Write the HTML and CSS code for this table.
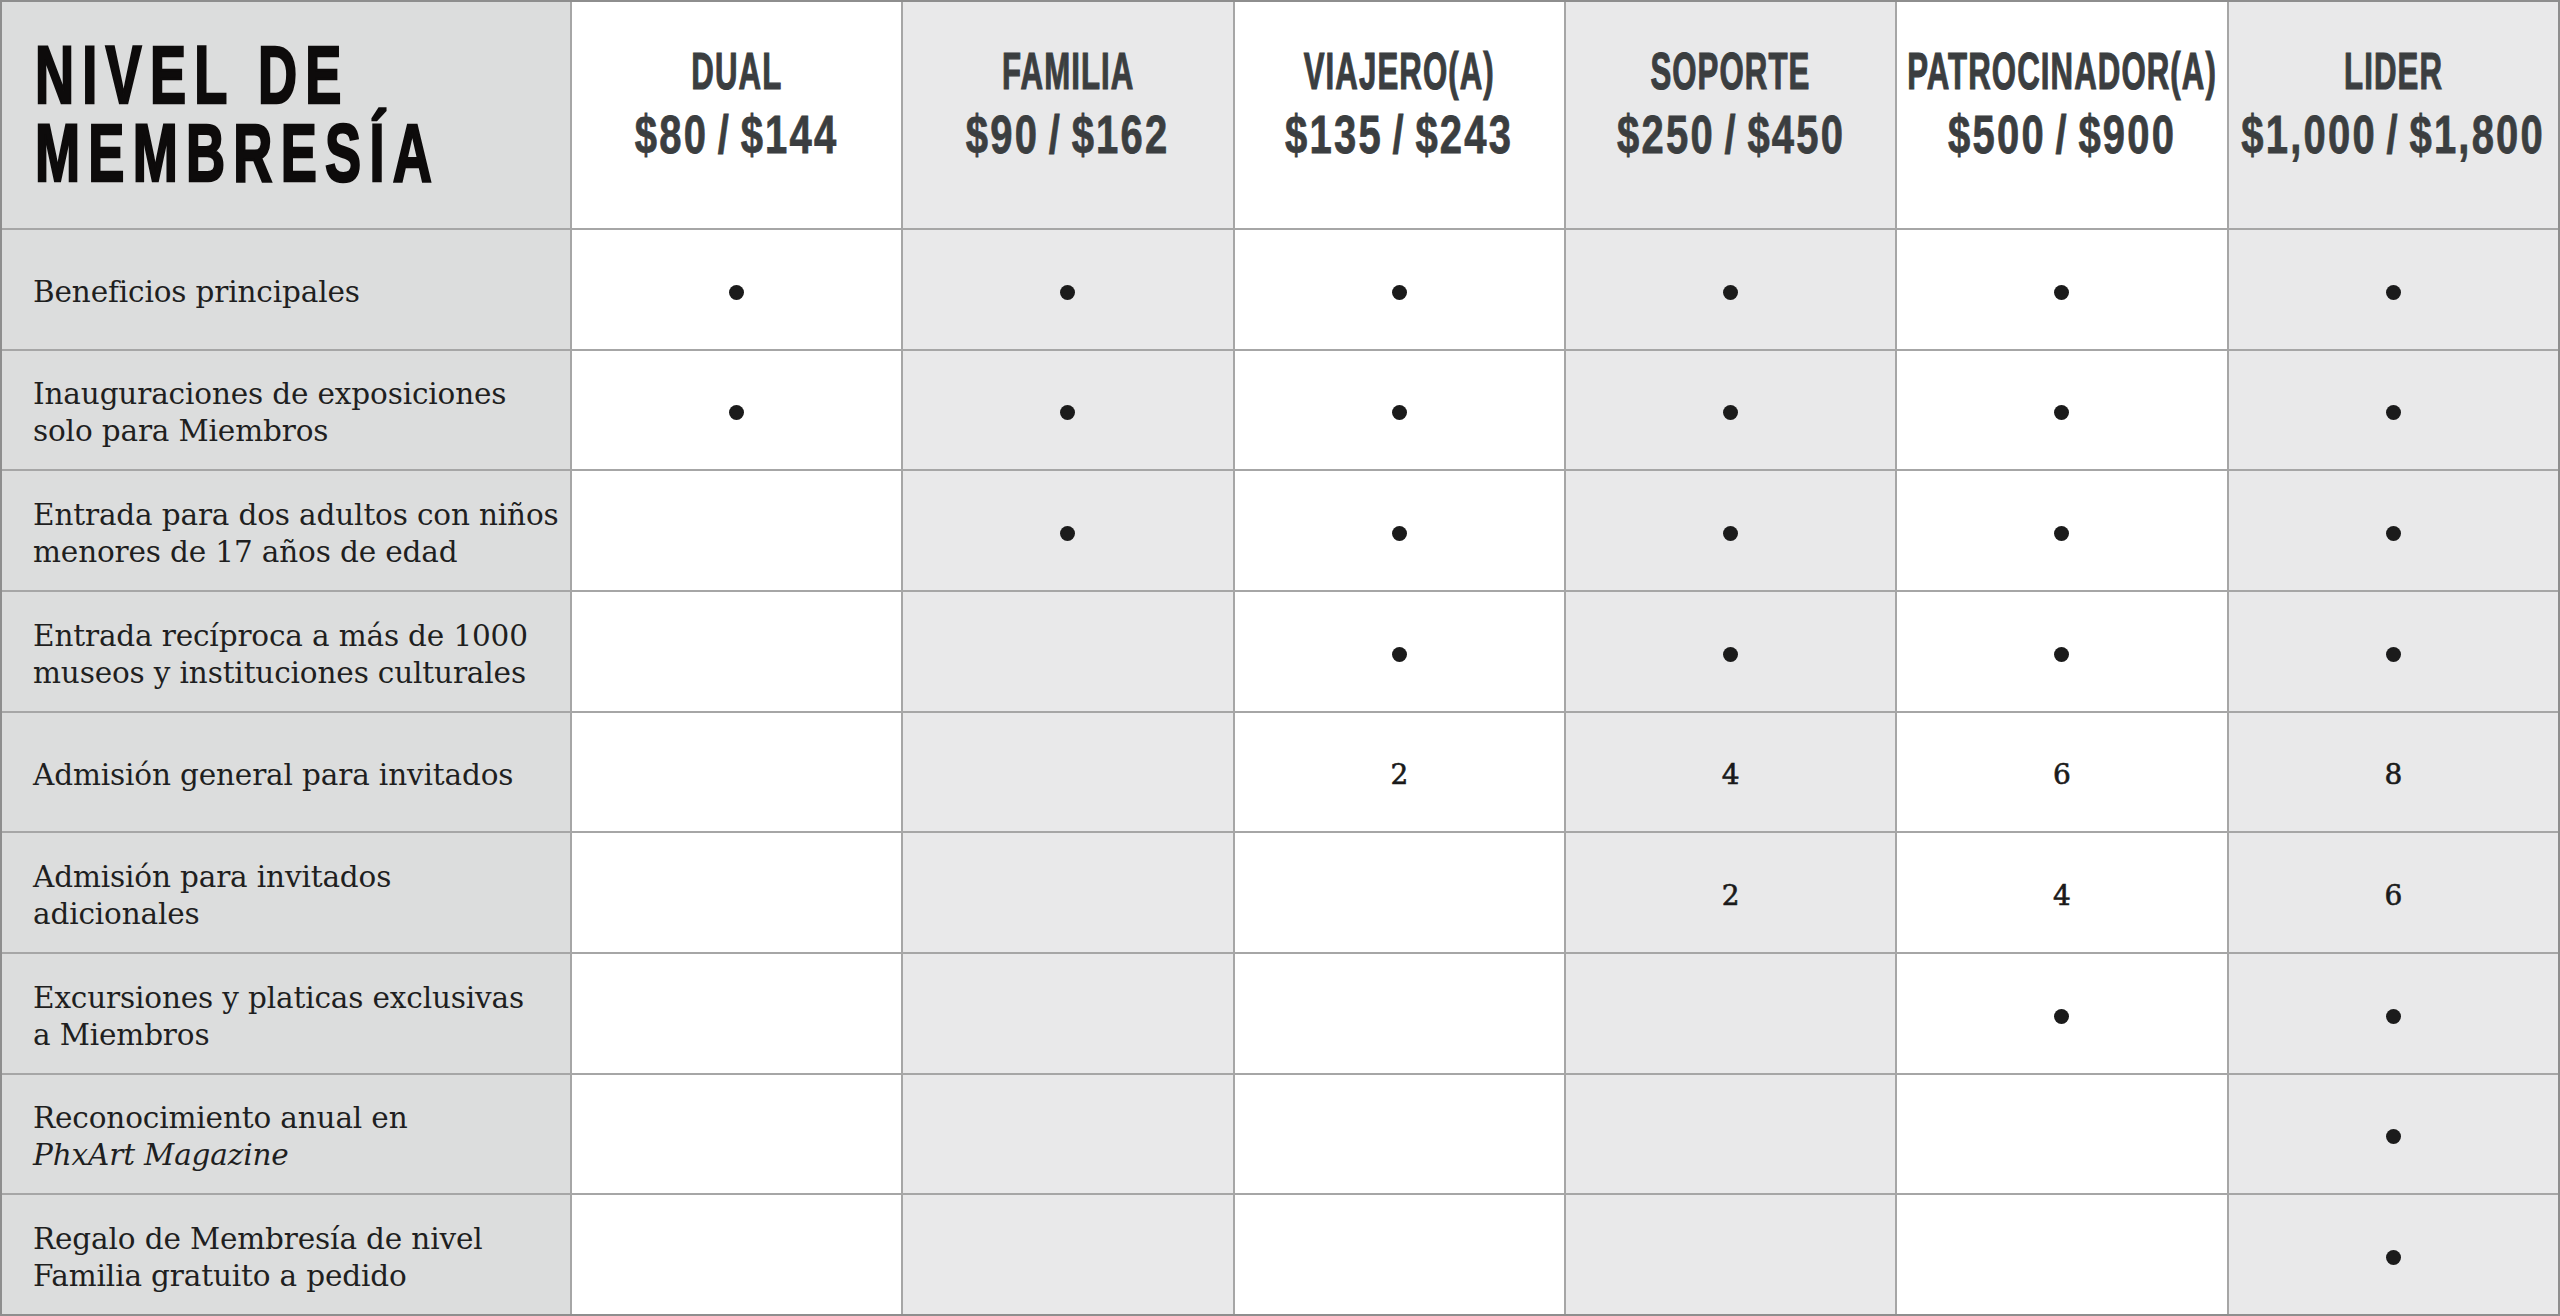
FILE: index.html
```html
<!DOCTYPE html>
<html lang="es">
<head>
<meta charset="utf-8">
<title>Nivel de Membresía</title>
<link rel="stylesheet" href="styles.css">
</head>
<body>
<div class="table">
  <div class="cell head title-cell"><div class="title"><span class="title-line">NIVEL DE</span><span class="title-line">MEMBRESÍA</span></div></div>
  <div class="cell head c-white"><span class="tier">DUAL</span><span class="price">$80 / $144</span></div>
  <div class="cell head c-gray"><span class="tier">FAMILIA</span><span class="price">$90 / $162</span></div>
  <div class="cell head c-white"><span class="tier">VIAJERO(A)</span><span class="price">$135 / $243</span></div>
  <div class="cell head c-gray"><span class="tier">SOPORTE</span><span class="price">$250 / $450</span></div>
  <div class="cell head c-white"><span class="tier">PATROCINADOR(A)</span><span class="price">$500 / $900</span></div>
  <div class="cell head c-gray"><span class="tier">LIDER</span><span class="price">$1,000 / $1,800</span></div>

  <div class="cell label"><p class="label-text">Beneficios principales</p></div>
  <div class="cell c-white mark"><i class="dot"></i></div>
  <div class="cell c-gray mark"><i class="dot"></i></div>
  <div class="cell c-white mark"><i class="dot"></i></div>
  <div class="cell c-gray mark"><i class="dot"></i></div>
  <div class="cell c-white mark"><i class="dot"></i></div>
  <div class="cell c-gray mark"><i class="dot"></i></div>

  <div class="cell label"><p class="label-text">Inauguraciones de exposiciones<br>solo para Miembros</p></div>
  <div class="cell c-white mark"><i class="dot"></i></div>
  <div class="cell c-gray mark"><i class="dot"></i></div>
  <div class="cell c-white mark"><i class="dot"></i></div>
  <div class="cell c-gray mark"><i class="dot"></i></div>
  <div class="cell c-white mark"><i class="dot"></i></div>
  <div class="cell c-gray mark"><i class="dot"></i></div>

  <div class="cell label"><p class="label-text">Entrada para dos adultos con niños<br>menores de 17 años de edad</p></div>
  <div class="cell c-white mark"></div>
  <div class="cell c-gray mark"><i class="dot"></i></div>
  <div class="cell c-white mark"><i class="dot"></i></div>
  <div class="cell c-gray mark"><i class="dot"></i></div>
  <div class="cell c-white mark"><i class="dot"></i></div>
  <div class="cell c-gray mark"><i class="dot"></i></div>

  <div class="cell label"><p class="label-text">Entrada recíproca a más de 1000<br>museos y instituciones culturales</p></div>
  <div class="cell c-white mark"></div>
  <div class="cell c-gray mark"></div>
  <div class="cell c-white mark"><i class="dot"></i></div>
  <div class="cell c-gray mark"><i class="dot"></i></div>
  <div class="cell c-white mark"><i class="dot"></i></div>
  <div class="cell c-gray mark"><i class="dot"></i></div>

  <div class="cell label"><p class="label-text">Admisión general para invitados</p></div>
  <div class="cell c-white mark"></div>
  <div class="cell c-gray mark"></div>
  <div class="cell c-white mark"><span class="num">2</span></div>
  <div class="cell c-gray mark"><span class="num">4</span></div>
  <div class="cell c-white mark"><span class="num">6</span></div>
  <div class="cell c-gray mark"><span class="num">8</span></div>

  <div class="cell label"><p class="label-text">Admisión para invitados<br>adicionales</p></div>
  <div class="cell c-white mark"></div>
  <div class="cell c-gray mark"></div>
  <div class="cell c-white mark"></div>
  <div class="cell c-gray mark"><span class="num">2</span></div>
  <div class="cell c-white mark"><span class="num">4</span></div>
  <div class="cell c-gray mark"><span class="num">6</span></div>

  <div class="cell label"><p class="label-text">Excursiones y platicas exclusivas<br>a Miembros</p></div>
  <div class="cell c-white mark"></div>
  <div class="cell c-gray mark"></div>
  <div class="cell c-white mark"></div>
  <div class="cell c-gray mark"></div>
  <div class="cell c-white mark"><i class="dot"></i></div>
  <div class="cell c-gray mark"><i class="dot"></i></div>

  <div class="cell label"><p class="label-text">Reconocimiento anual en<br><em>PhxArt Magazine</em></p></div>
  <div class="cell c-white mark"></div>
  <div class="cell c-gray mark"></div>
  <div class="cell c-white mark"></div>
  <div class="cell c-gray mark"></div>
  <div class="cell c-white mark"></div>
  <div class="cell c-gray mark"><i class="dot"></i></div>

  <div class="cell label"><p class="label-text">Regalo de Membresía de nivel<br>Familia gratuito a pedido</p></div>
  <div class="cell c-white mark"></div>
  <div class="cell c-gray mark"></div>
  <div class="cell c-white mark"></div>
  <div class="cell c-gray mark"></div>
  <div class="cell c-white mark"></div>
  <div class="cell c-gray mark"><i class="dot"></i></div>
</div>
</body>
</html>
```
FILE: styles.css
```css
html, body {
  margin: 0;
  padding: 0;
  background: #ffffff;
}

.table {
  box-sizing: border-box;
  width: 2560px;
  height: 1316px;
  display: grid;
  grid-template-columns: 568px repeat(6, 1fr);
  grid-template-rows: 226px repeat(9, 1fr);
  gap: 2px;
  border: 2px solid #8e8e8e;
  background: #a6a6a6;
  overflow: hidden;
}

.cell {
  min-width: 0;
  overflow: hidden;
}

.c-white { background: #ffffff; }
.c-gray { background: #e9e9ea; }

.title-cell,
.label {
  background: #dcdddd;
}

.title-cell {
  padding: 34px 0 0 33px;
  box-sizing: border-box;
}

.title {
  display: flex;
  flex-direction: column;
  font-family: "Liberation Sans", Arial, sans-serif;
  font-weight: 700;
  font-size: 82px;
  line-height: 78px;
  letter-spacing: 12.5px;
  color: #0d0b0b;
  -webkit-text-stroke: 2.5px #0d0b0b;
  transform: scaleX(0.66);
  transform-origin: 0 0;
  white-space: nowrap;
}

.title-line {
  display: block;
  height: 78px;
  overflow: visible;
}

.head:not(.title-cell) {
  display: flex;
  flex-direction: column;
  align-items: center;
  padding-top: 38px;
  font-family: "Liberation Sans", Arial, sans-serif;
  font-weight: 700;
  color: #3b3e40;
  white-space: nowrap;
}

.tier {
  display: block;
  font-size: 52px;
  line-height: 63px;
  letter-spacing: 1.8px;
  -webkit-text-stroke: 1.2px #3b3e40;
  transform: scaleX(0.6);
}

.price {
  display: block;
  font-size: 54px;
  line-height: 62px;
  letter-spacing: 3px;
  word-spacing: -5px;
  -webkit-text-stroke: 0.8px #3b3e40;
  transform: scaleX(0.74);
}

.label {
  display: flex;
  align-items: center;
  padding: 7px 0 0 31px;
  box-sizing: border-box;
}

.label-text {
  margin: 0;
  font-family: "DejaVu Serif", "Liberation Serif", serif;
  font-size: 29.5px;
  line-height: 37px;
  letter-spacing: -0.15px;
  color: #1f1f1f;
  white-space: nowrap;
}

.label-text em {
  font-style: italic;
}

.mark {
  display: flex;
  align-items: center;
  justify-content: center;
  padding-top: 6px;
  box-sizing: border-box;
}

.dot {
  display: block;
  width: 15px;
  height: 15px;
  border-radius: 50%;
  background: #1b1b1b;
}

.num {
  font-family: "DejaVu Serif", "Liberation Serif", serif;
  font-size: 28px;
  line-height: 30px;
  color: #1a1a1a;
  -webkit-text-stroke: 0.6px #1a1a1a;
}
```
